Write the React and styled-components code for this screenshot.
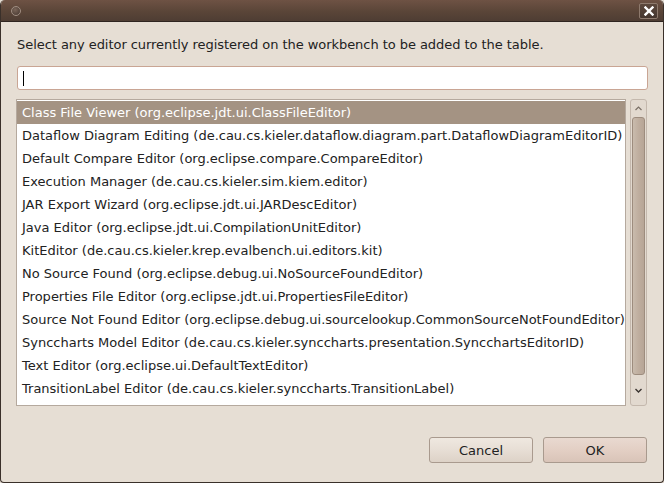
import styled, { createGlobalStyle } from "styled-components";

const Global = createGlobalStyle`
  html, body {
    margin: 0;
    padding: 0;
    background: #e6ded4;
  }
  * { box-sizing: border-box; }
`;

// styled-components →
const Window = styled.div`
  width: 664px;
  height: 483px;
  display: flex;
  flex-direction: column;
  font-family: "DejaVu Sans", "Liberation Sans", sans-serif;
  font-size: 13px;
  color: #222;
  background: #e6ded4;
  border: 1px solid #3a302a;
  border-top: none;
  border-radius: 5px 5px 4px 4px;
  overflow: hidden;
`;
const TitleBar = styled.div`
  height: 22px;
  flex: none;
  display: flex;
  align-items: center;
  justify-content: space-between;
  padding: 0 5px 0 10px;
  background: linear-gradient(#6e5244, #5a4538 55%, #4e3d33);
  border-bottom: 1px solid #2f2520;
`;
const MenuDot = styled.div`
  width: 10px;
  height: 10px;
  border-radius: 50%;
  background: radial-gradient(circle at 40% 35%, #7a6558, #43352e);
  border: 1px solid #a08e82;
`;
const CloseButton = styled.div`
  width: 19px;
  height: 16px;
  display: flex;
  align-items: center;
  justify-content: center;
  border: 1px solid #8e7a6d;
  border-radius: 2px;
  background: linear-gradient(#5c483c, #45362e);
`;
const Body = styled.div`
  flex: 1;
  display: flex;
  flex-direction: column;
  padding: 15px 15px 19px 15px;
`;
const Label = styled.div`
  height: 16px;
  line-height: 16px;
  margin-left: 1px;
  margin-bottom: 13px;
  letter-spacing: -0.05px;
`;
const SearchInput = styled.div`
  height: 24px;
  margin: 0 0 9px 1px;
  background: #fff;
  border: 1px solid #c9a594;
  border-radius: 3px;
  display: flex;
  align-items: center;
  padding-left: 5px;
`;
const Caret = styled.div`
  width: 1px;
  height: 15px;
  background: #000;
`;
const ListArea = styled.div`
  height: 307px;
  display: flex;
  gap: 4px;
`;
const List = styled.div`
  flex: 1;
  background: #fff;
  border: 1px solid #b5a99e;
  padding-top: 1px;
`;
const Row = styled.div`
  height: 23px;
  line-height: 23px;
  padding-left: 5px;
  white-space: nowrap;
  color: ${(p) => (p.$selected ? "#fff" : "#222")};
  background: ${(p) => (p.$selected ? "#a49383" : "transparent")};
`;
const Scrollbar = styled.div`
  width: 17px;
  display: flex;
  flex-direction: column;
  border: 1px solid #c4b8ad;
  border-radius: 3px;
  background: #e2d9cf;
  margin-right: 1px;
`;
const Arrow = styled.div`
  height: ${(p) => p.$h}px;
  flex: none;
  display: flex;
  align-items: center;
  justify-content: center;
`;
const Thumb = styled.div`
  flex: 1;
  margin: 0 1px;
  border: 1px solid #9d8c7e;
  border-radius: 3px;
  background: linear-gradient(90deg, #c9bbad, #bfae9f 50%, #b7a596);
`;
const Footer = styled.div`
  margin-top: auto;
  display: flex;
  justify-content: flex-end;
  gap: 10px;
  padding-right: 1px;
`;
const Button = styled.div`
  width: 104px;
  height: 26px;
  display: flex;
  align-items: center;
  justify-content: center;
  font-size: 13px;
  color: #222;
  border: 1px solid #a99a8e;
  border-radius: 3px;
  background: ${(p) =>
    p.$default
      ? "linear-gradient(#e9d9d0, #e3cfc4 50%, #d9c4b8)"
      : "linear-gradient(#efe8e0, #e7ded5 50%, #ddd2c7)"};
`;
// ← styled-components

const editors = [
  "Class File Viewer (org.eclipse.jdt.ui.ClassFileEditor)",
  "Dataflow Diagram Editing (de.cau.cs.kieler.dataflow.diagram.part.DataflowDiagramEditorID)",
  "Default Compare Editor (org.eclipse.compare.CompareEditor)",
  "Execution Manager (de.cau.cs.kieler.sim.kiem.editor)",
  "JAR Export Wizard (org.eclipse.jdt.ui.JARDescEditor)",
  "Java Editor (org.eclipse.jdt.ui.CompilationUnitEditor)",
  "KitEditor (de.cau.cs.kieler.krep.evalbench.ui.editors.kit)",
  "No Source Found (org.eclipse.debug.ui.NoSourceFoundEditor)",
  "Properties File Editor (org.eclipse.jdt.ui.PropertiesFileEditor)",
  "Source Not Found Editor (org.eclipse.debug.ui.sourcelookup.CommonSourceNotFoundEditor)",
  "Synccharts Model Editor (de.cau.cs.kieler.synccharts.presentation.SyncchartsEditorID)",
  "Text Editor (org.eclipse.ui.DefaultTextEditor)",
  "TransitionLabel Editor (de.cau.cs.kieler.synccharts.TransitionLabel)",
];

const App = () => {
  return (
    <Window>
      <Global />
      <TitleBar>
        <MenuDot />
        <CloseButton>
          <svg width="10" height="10" viewBox="0 0 10 10">
            <path d="M1.5 1.5 L8.5 8.5 M8.5 1.5 L1.5 8.5" stroke="#fff" strokeWidth="2.4" strokeLinecap="square" />
          </svg>
        </CloseButton>
      </TitleBar>
      <Body>
        <Label>Select any editor currently registered on the workbench to be added to the table.</Label>
        <SearchInput>
          <Caret />
        </SearchInput>
        <ListArea>
          <List>
            {editors.map((e, i) => (
              <Row key={e} $selected={i === 0}>
                {e}
              </Row>
            ))}
          </List>
          <Scrollbar>
            <Arrow $h={17}>
              <svg width="7" height="5" viewBox="0 0 7 5">
                <path d="M0.5 4 L3.5 1 L6.5 4" fill="none" stroke="#7a6f66" strokeWidth="1.2" />
              </svg>
            </Arrow>
            <Thumb />
            <Arrow $h={30}>
              <svg width="7" height="5" viewBox="0 0 7 5">
                <path d="M0.5 1 L3.5 4 L6.5 1" fill="none" stroke="#3a3430" strokeWidth="1.4" />
              </svg>
            </Arrow>
          </Scrollbar>
        </ListArea>
        <Footer>
          <Button>Cancel</Button>
          <Button $default>OK</Button>
        </Footer>
      </Body>
    </Window>
  );
};

export default App;
